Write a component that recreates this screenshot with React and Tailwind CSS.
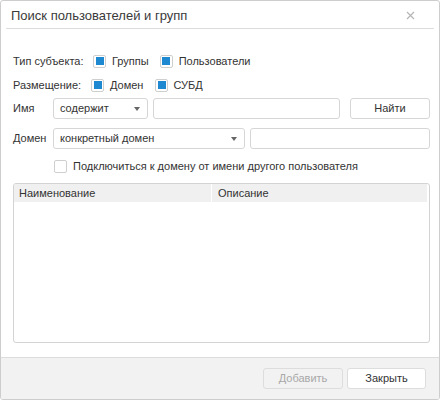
import React from "react";

function Check({ on }) {
  return (
    <span className="w-[13px] h-[13px] border border-[#cfcfcf] rounded-[2px] bg-white flex items-center justify-center shrink-0">
      {on && <span className="w-[8px] h-[8px] bg-[#1e88d0]" />}
    </span>
  );
}

function Select({ text, w }) {
  return (
    <div className={`${w} shrink-0 h-[21px] border border-[#d6d6d6] rounded-[3px] bg-white flex items-center justify-between pl-[6px] pr-[7px]`}>
      <span>{text}</span>
      <span className="w-0 h-0 border-l-[3px] border-r-[3px] border-t-[4px] border-l-transparent border-r-transparent border-t-[#666]" />
    </div>
  );
}

export default function App() {
  return (
    <div className="w-[440px] h-[400px] bg-white border border-[#cdcdcd] rounded-[3px] flex flex-col text-[11px] text-[#333] font-['Liberation_Sans',Arial,sans-serif] overflow-hidden">
      <div className="mx-[5px] h-[28px] border-b border-[#dcdcdc] flex items-center justify-between pl-[5px] pr-[19px]">
        <span className="text-[13px] text-[#3a3a3a] pt-[2px]">Поиск пользователей и групп</span>
        <svg width="9" height="9" viewBox="0 0 9 9" className="mt-[2px]">
          <path d="M1 1L8 8M8 1L1 8" stroke="#b5b5b5" strokeWidth="1.2" />
        </svg>
      </div>

      <div className="flex-1 pl-[12px] pr-[9px] pt-[24px] flex flex-col">
        <div className="h-[16px] flex items-center">
          <span className="w-[80px]">Тип субъекта:</span>
          <Check on />
          <span className="ml-[6px]">Группы</span>
          <span className="ml-[11px]"><Check on /></span>
          <span className="ml-[6px]">Пользователи</span>
        </div>
        <div className="h-[16px] mt-[8px] flex items-center">
          <span className="w-[78px]">Размещение:</span>
          <Check on />
          <span className="ml-[6px]">Домен</span>
          <span className="ml-[12px]"><Check on /></span>
          <span className="ml-[5px]">СУБД</span>
        </div>
        <div className="mt-[5px] flex items-center">
          <span className="w-[40px] shrink-0">Имя</span>
          <Select text="содержит" w="w-[95px]" />
          <div className="ml-[5px] w-[187px] shrink-0 h-[21px] border border-[#d6d6d6] rounded-[3px]" />
          <button className="ml-[10px] w-[80px] shrink-0 h-[21px] border border-[#d6d6d6] rounded-[3px] bg-white">Найти</button>
        </div>
        <div className="mt-[9px] flex items-center">
          <span className="w-[40px] shrink-0">Домен</span>
          <Select text="конкретный домен" w="w-[192px]" />
          <div className="ml-[5px] w-[180px] shrink-0 h-[21px] border border-[#d6d6d6] rounded-[3px]" />
        </div>
        <div className="mt-[11px] h-[13px] flex items-center pl-[41px]">
          <Check />
          <span className="ml-[6px]">Подключиться к домену от имени другого пользователя</span>
        </div>
        <div className="mt-[10px] w-[417px] h-[160px] border border-[#d3d3d3] rounded-[3px] overflow-hidden">
          <div className="h-[18px] bg-[#f0f0f0] flex mr-[2px]">
            <div className="w-[198px] border-r border-white pl-[5px] flex items-center">Наименование</div>
            <div className="flex-1 pl-[6px] flex items-center">Описание</div>
          </div>
        </div>
      </div>

      <div className="h-[42px] bg-[#f2f2f2] border-t border-[#dcdcdc] flex items-center justify-end pr-[13px] gap-[4px]">
        <button className="w-[80px] h-[21px] border border-[#dddddd] rounded-[3px] bg-[#f2f2f2] text-[#a8a8a8]">Добавить</button>
        <button className="w-[79px] h-[21px] border border-[#dddddd] rounded-[3px] bg-white">Закрыть</button>
      </div>
    </div>
  );
}
